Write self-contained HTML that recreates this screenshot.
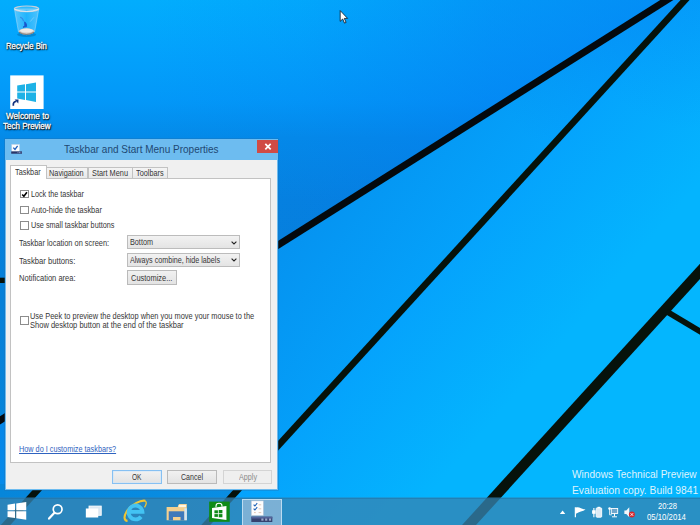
<!DOCTYPE html>
<html lang="en"><head><meta charset="utf-8"><title>Taskbar and Start Menu Properties</title>
<style>
html,body{margin:0;padding:0}
body{width:700px;height:525px;overflow:hidden;position:relative;background:#0495f0;font-family:"Liberation Sans",sans-serif}
.abs,.t,#wall,#dlg div,#dlg svg,#tb,#tb div,#tb svg,.ic{position:absolute}
.t{white-space:pre;line-height:1;transform-origin:0 0;font-family:"Liberation Sans",sans-serif}
#wall{left:0;top:0}
#dlg{position:absolute;left:4.8px;top:139px;width:273.4px;height:350.8px;background:#6dbcf0;box-shadow:0 0 0 .6px rgba(40,110,170,.55)}
#body{left:1.3px;top:21.2px;width:271px;height:328.6px;background:#f0f0f0}
#close{left:252.6px;top:.5px;width:20.6px;height:13.6px;background:#d04b45}
#page{left:4.8px;top:39.2px;width:261.4px;height:284.8px;background:#fff;border:.8px solid #c2c2c2;box-sizing:border-box}
.tab{top:27.6px;height:11.8px;background:linear-gradient(#f4f4f4,#e9e9e9);border:.8px solid #c2c2c2;border-bottom:none;box-sizing:border-box}
#tab0{top:25.8px;height:14.3px;background:#fff}
.cb{width:8.6px;height:8.6px;border:.8px solid #8c8c8c;background:#fff;box-sizing:border-box}
.combo{height:14px;border:.8px solid #bcbcbc;background:linear-gradient(#f2f2f2,#e4e4e4);box-sizing:border-box}
.btn{height:13.6px;border:.8px solid #bababa;background:linear-gradient(#f1f1f1,#e3e3e3);box-sizing:border-box}
#tb{left:0;top:498px;width:700px;height:27px;background:rgba(54,132,178,.763);box-shadow:inset 0 .7px 0 rgba(20,90,140,.35)}

</style></head>
<body>
<svg id="wall" width="700" height="525" viewBox="0 0 700 525">
<defs>
<linearGradient id="gA" x1="0" y1="0" x2="0" y2="525" gradientUnits="userSpaceOnUse">
<stop offset="0" stop-color="#02adfd"/><stop offset=".09" stop-color="#03a3fc"/><stop offset=".19" stop-color="#0398f8"/><stop offset=".263" stop-color="#048ae8"/><stop offset=".381" stop-color="#0681de"/><stop offset=".571" stop-color="#0580d8"/><stop offset="1" stop-color="#0688dc"/>
</linearGradient>
<linearGradient id="gAx" x1="150" y1="0" x2="660" y2="0" gradientUnits="userSpaceOnUse">
<stop offset="0" stop-color="#0478f0" stop-opacity="0"/><stop offset=".294" stop-color="#0478f0" stop-opacity=".12"/><stop offset=".667" stop-color="#0478f0" stop-opacity=".43"/><stop offset="1" stop-color="#0478f0" stop-opacity=".58"/>
</linearGradient>
<linearGradient id="gB" x1="199" y1="156.3" x2="442" y2="332.4" gradientUnits="userSpaceOnUse">
<stop offset="0" stop-color="#0687e8"/><stop offset="1" stop-color="#04a5fd"/>
</linearGradient>
<linearGradient id="gC" x1="400" y1="300" x2="513.4" y2="398.1" gradientUnits="userSpaceOnUse">
<stop offset="0" stop-color="#05a2fc"/><stop offset="1" stop-color="#04b4fe"/>
</linearGradient>
<linearGradient id="gE" x1="0" y1="0" x2="230" y2="0" gradientUnits="userSpaceOnUse"><stop offset="0" stop-color="#0686da"/><stop offset="1" stop-color="#098ee4"/></linearGradient>
<linearGradient id="gBx" x1="520" y1="130" x2="668" y2="0" gradientUnits="userSpaceOnUse"><stop offset="0" stop-color="#0478f0" stop-opacity="0"/><stop offset="1" stop-color="#0478f0" stop-opacity=".4"/></linearGradient>
<radialGradient id="gCx" cx="700" cy="0" r="130" gradientUnits="userSpaceOnUse"><stop offset="0" stop-color="#0478f0" stop-opacity=".22"/><stop offset="1" stop-color="#0478f0" stop-opacity="0"/></radialGradient>
</defs>
<rect width="700" height="525" fill="url(#gA)"/>
<rect width="700" height="525" fill="url(#gAx)"/>
<polygon points="668,0 700,0 700,525 0,525 0,421" fill="url(#gB)"/>
<polygon points="668,0 700,0 700,140 450,140" fill="url(#gBx)"/>
<polygon points="685,0 700,0 700,525 205.8,525" fill="url(#gC)"/>
<polygon points="685,0 700,0 700,140 557,140" fill="url(#gCx)"/>
<polygon points="700,271.5 700,525 469,525" fill="#04b6fe"/>
<polygon points="0,484 243.2,484 205.8,525 0,525" fill="url(#gE)"/>
<g stroke="#06120b" fill="none">
<line x1="700" y1="-20.9" x2="-20" y2="432.9" stroke-width="7" stroke="#04090d"/>
<line x1="703.3" y1="-20" x2="187.5" y2="545" stroke-width="6.6"/>
<line x1="718.2" y1="251.5" x2="450.8" y2="545" stroke-width="10.3"/>
<line x1="666.7" y1="311.4" x2="710" y2="337.4" stroke-width="5.8"/>
<line x1="61.5" y1="463.5" x2="-8.5" y2="540.5" stroke-width="7"/>
</g>
<rect x="0" y="277.7" width="6" height="5.3" fill="#06120b"/>
</svg>


<!-- desktop icons -->
<svg class="ic" style="left:10px;top:2px" width="34" height="38" viewBox="10 2 34 38">
<defs><linearGradient id="bn" x1="0" y1="0" x2="1" y2="0"><stop offset="0" stop-color="#fff" stop-opacity=".34"/><stop offset=".5" stop-color="#fff" stop-opacity=".12"/><stop offset="1" stop-color="#fff" stop-opacity=".3"/></linearGradient></defs>
<ellipse cx="26.6" cy="34.6" rx="9.5" ry="2.4" fill="#04508c" opacity=".35"/>
<path d="M14.4 9L18.4 31.5Q26.5 38 34.7 31.5L38.8 9Z" fill="url(#bn)" stroke="#d5e6f4" stroke-opacity=".55" stroke-width=".7"/>
<ellipse cx="26.6" cy="31.3" rx="7.9" ry="3" fill="#cfc7c0"/>
<ellipse cx="26.6" cy="30.6" rx="6.6" ry="2" fill="#efeae6"/>
<path d="M19 32.2Q26.5 36.6 34 32.2" stroke="#7d6f66" stroke-width=".9" fill="none"/>
<path d="M20.600 17.300l1.800 1.300 1 2.200" stroke="#2f78e0" stroke-opacity=".7" stroke-width="1.200" fill="none" stroke-linecap="round"/><path d="M24.700 21.800l1.700 2.300 .2 2.400-3.600 .8 1.800-1.600Z" fill="#1a56cc" stroke="#1a56cc" stroke-width=".9" stroke-linejoin="round"/><path d="M30.200 21.600l3.600-4.200" stroke="#9fd6fa" stroke-opacity=".7" stroke-width=".8" fill="none"/>
<ellipse cx="26.6" cy="8.8" rx="12.2" ry="2.8" fill="#fff" fill-opacity=".18" stroke="#c3cfdb" stroke-width="1.2"/>
<path d="M14.6 9.3Q26.6 13.6 38.6 9.3" stroke="#eef4fa" stroke-width=".7" fill="none"/>
</svg>
<svg class="ic" style="left:10px;top:75px" width="34" height="34.5" viewBox="10 75 34 34.5">
<rect x="10.2" y="75.4" width="33.4" height="33.6" fill="#fff"/>
<g fill="#1eb2e6"><polygon points="17.2,85.5 25,84.3 25,91.5 17.2,91.5"/><polygon points="26,84.15 36,82.6 36,91.5 26,91.5"/><polygon points="17.2,92.5 25,92.5 25,99.9 17.2,98.6"/><polygon points="26,92.5 36,92.5 36,101.9 26,100.1"/></g>
<path d="M13.3 105.8Q13 101.6 16.3 101.4" stroke="#12327e" stroke-width="1.7" fill="none"/><polygon points="14.6,99.4 18.5,99.6 18.3,103.6" fill="#12327e"/>
</svg>
<!-- cursor -->
<svg class="ic" style="left:338px;top:9px" width="12" height="16" viewBox="338 9 12 16"><path d="M340.2 10.6V21.3L342.7 19 344.5 23.1 346.1 22.4 344.3 18.4H347.6Z" fill="#fff" stroke="#0b1420" stroke-width=".8" stroke-linejoin="round"/></svg>

<!-- dialog -->
<div id="dlg">
<div id="close"><svg width="20.6" height="13.6" viewBox="0 0 20.6 13.6"><path d="M8.3 3.900l5.400 5.400M13.700 3.900L8.300 9.300" stroke="#fff" stroke-width="1.700" fill="none"/></svg></div>
<div id="body"></div>
<svg width="12" height="11" viewBox="0 0 12 11" style="left:5.8px;top:5px"><rect x=".8" y=".5" width="7.6" height="7.2" fill="#fdfdfd" stroke="#c8d4e4" stroke-width=".5"/><path d="M2.3 3.6l1.700 1.900 2.600-3.600" stroke="#1f5fbc" stroke-width="1.300" fill="none"/><rect x=".2" y="7.400" width="10.800" height="2.300" fill="#2a3568"/><path d="M6.500 8.600h3.800" stroke="#8fa0cc" stroke-width=".9" stroke-dasharray="1 .5"/></svg>
<div class="tab" style="left:41.5px;width:42px"></div>
<div class="tab" style="left:83.4px;width:44.4px"></div>
<div class="tab" style="left:127.6px;width:35.4px"></div>
<div id="page"></div>
<div class="tab" id="tab0" style="left:4.8px;width:37px"></div>
<div class="cb" style="left:15.3px;top:50.8px"><svg width="7" height="7" viewBox="0 0 7 7" style="left:0;top:0"><path d="M1.2 3.5l1.7 1.8L5.9 1.3" stroke="#000" stroke-width="1.6" fill="none"/></svg></div>
<div class="cb" style="left:15.3px;top:66.6px"></div>
<div class="cb" style="left:15.3px;top:82.2px"></div>
<div class="cb" style="left:15.3px;top:177.4px;height:9px"></div>
<div class="combo" style="left:122.2px;top:96.4px;width:113px"></div>
<div class="combo" style="left:122.2px;top:114px;width:113px"></div>
<svg width="6" height="4" viewBox="0 0 6 4" style="left:226.5px;top:101.8px"><path d="M.6.6L3 3l2.4-2.4" stroke="#222" stroke-width="1.1" fill="none"/></svg>
<svg width="6" height="4" viewBox="0 0 6 4" style="left:226.5px;top:119.4px"><path d="M.6.6L3 3l2.4-2.4" stroke="#222" stroke-width="1.1" fill="none"/></svg>
<div class="btn" style="left:122.2px;top:131.4px;width:50px;height:14.4px"></div>
<div class="btn" style="left:107.2px;top:330.6px;height:14px;width:49.7px;border-color:#86c0f2;box-shadow:inset 0 0 0 .6px #cfe6fa"></div>
<div class="btn" style="left:162.6px;top:330.6px;height:14px;width:50.1px"></div>
<div class="btn" style="left:218.6px;top:330.6px;height:14px;width:48.8px;border-color:#d4d4d4;background:#efefef"></div>
</div>

<!-- taskbar -->
<div class="abs" style="left:0;top:497px;width:700px;height:1px;background:rgba(50,125,172,.42)"></div>
<div id="tb">
<div style="left:241.5px;top:.5px;width:40.6px;height:27px;background:rgba(172,199,222,.62);border:1px solid rgba(205,231,248,.8);border-bottom:none;box-sizing:border-box"></div>
</div>

<svg class="ic" style="left:0;top:497.7px" width="700" height="27.3" viewBox="0 497.7 700 27.3">
<!-- start -->
<g fill="#fff"><polygon points="7.5,504.4 15,503.3 15,510 7.5,510"/><polygon points="16.2,503.1 26.2,501.6 26.2,510 16.2,510"/><polygon points="7.5,511 15,511 15,517.7 7.5,516.6"/><polygon points="16.2,511 26.2,511 26.2,519.5 16.2,517.9"/></g>
<!-- search -->
<circle cx="57.6" cy="509" r="4.4" fill="none" stroke="#fff" stroke-width="1.7"/><path d="M54.4 512.4L49 518.3" stroke="#fff" stroke-width="2.2" stroke-linecap="round"/>
<!-- task view -->
<rect x="89" y="505.8" width="12.2" height="9.2" fill="#dbe8f2" stroke="#fff" stroke-width=".9"/><rect x="85.8" y="508.2" width="12.4" height="9" fill="#fff"/>
<!-- IE -->
<path d="M145.2 500.4C141 499.6 131 504 126.5 511.500C123.500 516.500 124 520.500 127.500 520.600" fill="none" stroke="#f2c530" stroke-width="2.1"/>
<path d="M129.800 511.600H142.400A6.900 6.900 0 1 0 141 516.400" fill="none" stroke="#43c3f3" stroke-width="3.900"/>
<path d="M145.200 500.400C146.800 501.800 146.200 504.500 144.500 507" fill="none" stroke="#f2c530" stroke-width="1.300"/>
<!-- folder -->
<path d="M166.600 506.600H177.600L179 503.700H186.800V519.900H166.600Z" fill="#f4d08f"/>
<rect x="178.600" y="504.600" width="7.400" height="2.200" fill="#fdf6e4"/>
<rect x="168.700" y="511" width="15.700" height="8.900" fill="#3f79ba"/><rect x="184.400" y="508" width="2.400" height="11.900" fill="#cfe6f7"/>
<rect x="173" y="516.700" width="7.500" height="3.200" fill="#f4d08f"/>
<!-- store -->
<rect x="209.100" y="501.300" width="20.600" height="20.200" fill="#0f8b17"/>
<path d="M216 507V505.600A3 2.600 0 0 1 222 505.600V506.400" fill="none" stroke="#fff" stroke-width="1.100"/>
<polygon points="212,507.600 226.400,505.800 226.400,519.700 212,517.800" fill="#fff"/>
<g fill="#0f8b17"><rect x="214.400" y="510" width="3.500" height="3"/><rect x="218.700" y="509.700" width="3.700" height="3.300"/><rect x="214.400" y="513.800" width="3.500" height="2.800"/><rect x="218.700" y="513.800" width="3.700" height="3.200"/></g>
<!-- active app icon -->
<rect x="251.300" y="500.600" width="12" height="14.600" fill="#fdfdfd" stroke="#b9c4d4" stroke-width=".5"/>
<path d="M253.600 504.300l1.300 1.400 2.300-2.900M253.600 508.300l1.300 1.400 2.300-2.900" stroke="#2264b8" stroke-width="1.100" fill="none"/>
<path d="M258.600 504.500h2.600M258.600 508.500h2.600M254 512.300h1.800M258.600 512.300h2.600" stroke="#d9b9a4" stroke-width=".8"/>
<rect x="251.300" y="516.400" width="21" height="5.300" fill="#34416f"/><rect x="251.300" y="516.400" width="21" height="1.800" fill="#52639a"/>
<g fill="#98a5c8"><rect x="261.300" y="518.200" width="2.200" height="2.200"/><rect x="265.100" y="518.200" width="2.200" height="2.200"/><rect x="268.900" y="518.200" width="2.200" height="2.200"/></g>
<!-- tray -->
<polygon points="559.900,513.700 562.600,510.300 565.300,513.700" fill="#fff"/>
<path d="M575.400 507V517" stroke="#fff" stroke-width="1.200"/><path d="M576 507.300C579 506.200 581 508.600 585.600 509.300C583 511.600 579 511.300 576 513.400Z" fill="#fff"/>
<rect x="596.200" y="507.600" width="5.500" height="9.300" rx=".8" fill="#dcebf5" stroke="#fff" stroke-width=".9"/><rect x="597.600" y="506.500" width="2.700" height="1.200" fill="#fff"/>
<path d="M593.900 507.600V510M592.700 510.600h2.400v2.400h-2.400zM593.900 513V517" stroke="#fff" stroke-width="1.100" fill="#fff"/>
<rect x="611.300" y="508.200" width="6.400" height="5" fill="#6fa6cb" stroke="#fff" stroke-width=".9"/><path d="M614.500 513.300V516M612 516.500h5" stroke="#fff" stroke-width="1"/>
<circle cx="609.600" cy="508.300" r="1.300" fill="#fff"/><path d="M609.600 509V514.500H612" stroke="#fff" stroke-width=".8" fill="none"/>
<polygon points="624.400,510.200 626.300,510.200 629.300,507 629.300,517 626.300,513.800 624.400,513.800" fill="#f2f6fa"/>
<circle cx="631.900" cy="514.200" r="3" fill="#d8262c"/><path d="M630.600 512.900l2.600 2.600M633.200 512.900l-2.600 2.600" stroke="#fff" stroke-width=".9"/>
</svg>

<span class="t" style="left:64.00px;top:145.00px;font-size:10.4px;color:#1f4872;transform:scaleX(0.9629);">Taskbar and Start Menu Properties</span>
<span class="t" style="left:14.90px;top:169.00px;font-size:8.2px;color:#363636;transform:scaleX(0.8963);">Taskbar</span>
<span class="t" style="left:48.80px;top:170.00px;font-size:8.2px;color:#363636;transform:scaleX(0.8969);">Navigation</span>
<span class="t" style="left:91.80px;top:170.00px;font-size:8.2px;color:#363636;transform:scaleX(0.8989);">Start Menu</span>
<span class="t" style="left:136.20px;top:170.00px;font-size:8.2px;color:#363636;transform:scaleX(0.8917);">Toolbars</span>
<span class="t" style="left:30.90px;top:191.00px;font-size:8.2px;color:#363636;transform:scaleX(0.8805);">Lock the taskbar</span>
<span class="t" style="left:30.90px;top:207.00px;font-size:8.2px;color:#363636;transform:scaleX(0.9108);">Auto-hide the taskbar</span>
<span class="t" style="left:30.90px;top:222.00px;font-size:8.2px;color:#363636;transform:scaleX(0.8853);">Use small taskbar buttons</span>
<span class="t" style="left:19.40px;top:240.00px;font-size:8.2px;color:#363636;transform:scaleX(0.9040);">Taskbar location on screen:</span>
<span class="t" style="left:19.40px;top:258.00px;font-size:8.2px;color:#363636;transform:scaleX(0.9371);">Taskbar buttons:</span>
<span class="t" style="left:19.40px;top:275.00px;font-size:8.2px;color:#363636;transform:scaleX(0.9210);">Notification area:</span>
<span class="t" style="left:130.00px;top:239.00px;font-size:8.2px;color:#363636;transform:scaleX(0.8862);">Bottom</span>
<span class="t" style="left:130.00px;top:257.00px;font-size:8.2px;color:#363636;transform:scaleX(0.8750);">Always combine, hide labels</span>
<span class="t" style="left:131.00px;top:275.00px;font-size:8.2px;color:#363636;transform:scaleX(0.9099);">Customize...</span>
<span class="t" style="left:30.40px;top:313.00px;font-size:8.2px;color:#363636;transform:scaleX(0.9072);">Use Peek to preview the desktop when you move your mouse to the</span>
<span class="t" style="left:30.40px;top:322.00px;font-size:8.2px;color:#363636;transform:scaleX(0.9194);">Show desktop button at the end of the taskbar</span>
<span class="t" style="left:19.40px;top:446.00px;font-size:8.2px;color:#2f63c0;transform:scaleX(0.8890);text-decoration:underline;">How do I customize taskbars?</span>
<span class="t" style="left:132.00px;top:474.00px;font-size:8.2px;color:#363636;transform:scaleX(0.8021);">OK</span>
<span class="t" style="left:181.00px;top:474.00px;font-size:8.2px;color:#363636;transform:scaleX(0.8627);">Cancel</span>
<span class="t" style="left:238.50px;top:474.00px;font-size:8.2px;color:#8a8a8a;transform:scaleX(0.8787);">Apply</span>
<span class="t" style="left:6.30px;top:42.00px;font-size:8.4px;color:#fff;transform:scaleX(0.9249);-webkit-text-stroke:.3px #fff;text-shadow:.7px .8px 1px #000,.5px .5px 1.5px rgba(0,0,0,.9),0 0 2.5px rgba(0,0,0,.7);">Recycle Bin</span>
<span class="t" style="left:5.50px;top:112.00px;font-size:8.4px;color:#fff;transform:scaleX(0.9755);-webkit-text-stroke:.3px #fff;text-shadow:.7px .8px 1px #000,.5px .5px 1.5px rgba(0,0,0,.9),0 0 2.5px rgba(0,0,0,.7);">Welcome to</span>
<span class="t" style="left:3.20px;top:122.00px;font-size:8.4px;color:#fff;transform:scaleX(0.9556);-webkit-text-stroke:.3px #fff;text-shadow:.7px .8px 1px #000,.5px .5px 1.5px rgba(0,0,0,.9),0 0 2.5px rgba(0,0,0,.7);">Tech Preview</span>
<span class="t" style="left:572.00px;top:470.00px;font-size:10.3px;color:#dff3fd;transform:scaleX(0.9822);">Windows Technical Preview</span>
<span class="t" style="left:571.50px;top:486.00px;font-size:10.3px;color:#dff3fd;transform:scaleX(0.9990);">Evaluation copy. Build 9841</span>
<span class="t" style="left:657.50px;top:503.00px;font-size:8.2px;color:#fff;transform:scaleX(0.9268);">20:28</span>
<span class="t" style="left:647.40px;top:514.00px;font-size:8.2px;color:#fff;transform:scaleX(0.9491);">05/10/2014</span>

</body></html>
